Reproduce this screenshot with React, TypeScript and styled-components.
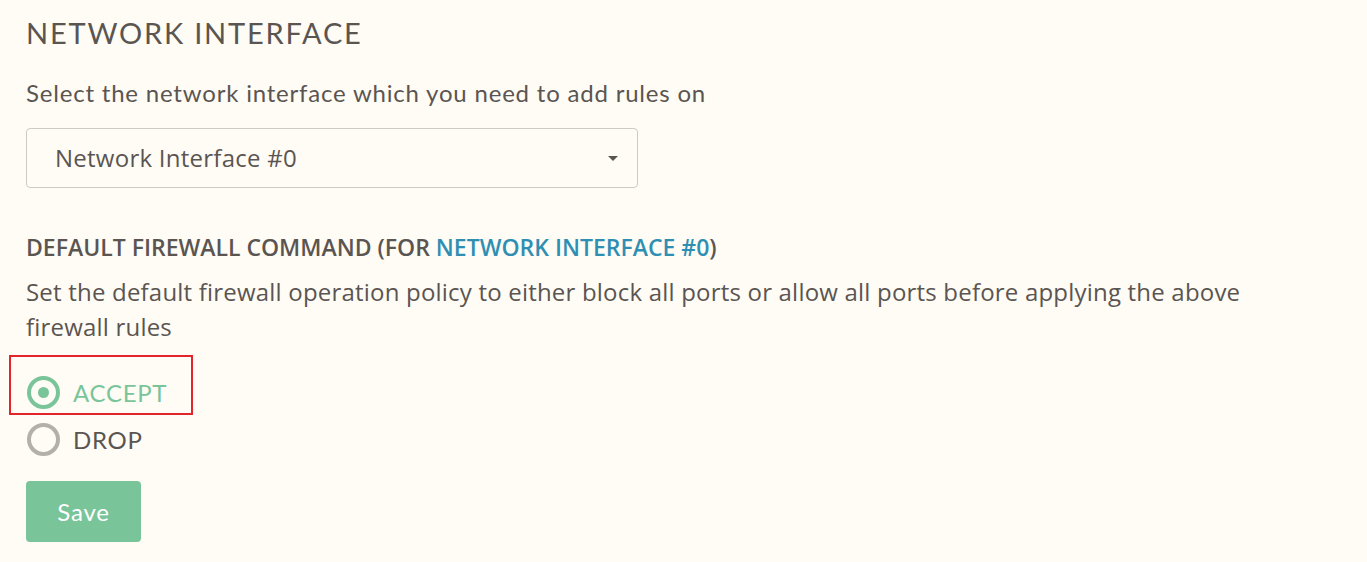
import React, { useState } from "react";
import styled, { createGlobalStyle } from "styled-components";

const Global = createGlobalStyle`
  html, body { margin: 0; padding: 0; background: #fffcf5; }
  body { font-family: "Open Sans", sans-serif; color: #5b5552; }
`;

const Page = styled.div`
  width: 1300px;
  padding: 14px 0 0 26px;
  box-sizing: border-box;
  display: flex;
  flex-direction: column;
  align-items: flex-start;
`;

const Title = styled.h1`
  margin: 0;
  font-family: "Lato", sans-serif;
  font-weight: 400;
  font-size: 29px;
  line-height: 38px;
  letter-spacing: 1.8px;
  color: #5b5552;
`;

const Lead = styled.p`
  margin: 25px 0 0 0;
  font-family: "Lato", sans-serif;
  font-size: 24px;
  line-height: 32px;
  letter-spacing: 0.8px;
  color: #5b5552;
`;

const SelectBox = styled.div`
  margin-top: 19px;
  width: 612px;
  height: 60px;
  box-sizing: border-box;
  border: 1px solid #cfcbc4;
  border-radius: 4px;
  background: #fffcf5;
  display: flex;
  align-items: center;
  justify-content: space-between;
  padding: 0 19px 2px 28px;
  font-size: 24px;
  letter-spacing: 0.25px;
  color: #5b5552;
`;

const Caret = styled.span`
  width: 0;
  height: 0;
  margin-top: 2px;
  border-left: 5.5px solid transparent;
  border-right: 5.5px solid transparent;
  border-top: 5.5px solid #5b5552;
`;

const SubTitle = styled.h2`
  margin: 44px 0 0 0;
  font-size: 23px;
  font-weight: 600;
  letter-spacing: 0px;
  line-height: 30px;
  color: #5b5552;
`;

const Link = styled.span`
  color: #2f8fb3;
`;

const Para = styled.p`
  margin: 12px 0 0 0;
  font-size: 24px;
  line-height: 35px;
  letter-spacing: 0.2px;
  color: #5b5552;
`;

const RadioGroup = styled.div`
  margin-top: 31px;
  display: flex;
  flex-direction: column;
  gap: 12px;
  align-items: flex-start;
`;

const RadioRow = styled.label<{ $highlight?: boolean }>`
  display: flex;
  align-items: center;
  gap: 13px;
  height: 35px;
  padding-left: 1px;
  cursor: pointer;
  position: relative;
  &::after {
    content: "";
    display: ${(p) => (p.$highlight ? "block" : "none")};
    position: absolute;
    left: -17px;
    top: -20px;
    width: 184px;
    height: 60px;
    border: 2px solid #e3242b;
    box-sizing: border-box;
    pointer-events: none;
  }
`;

const Circle = styled.span<{ $checked: boolean }>`
  width: 33px;
  height: 33px;
  box-sizing: border-box;
  border-radius: 50%;
  border: 4px solid ${(p) => (p.$checked ? "#7ac49a" : "#b3afa9")};
  display: flex;
  align-items: center;
  justify-content: center;
  &::before {
    content: "";
    width: 11px;
    height: 11px;
    border-radius: 50%;
    background: #7ac49a;
    display: ${(p) => (p.$checked ? "block" : "none")};
  }
`;

const RadioText = styled.span<{ $checked: boolean }>`
  font-family: "Lato", sans-serif;
  font-size: 24px;
  letter-spacing: 0.7px;
  color: ${(p) => (p.$checked ? "#7ac49a" : "#5b5552")};
`;

const SaveButton = styled.button`
  margin-top: 24px;
  width: 115px;
  height: 61px;
  border: none;
  border-radius: 4px;
  background: #7ac49a;
  color: #fff;
  font-family: "Lato", sans-serif;
  font-size: 24px;
  letter-spacing: 0.8px;
  cursor: pointer;
`;

export default function App() {
  const [value, setValue] = useState("ACCEPT");
  return (
    <>
      <Global />
      <Page>
        <Title>NETWORK INTERFACE</Title>
        <Lead>Select the network interface which you need to add rules on</Lead>
        <SelectBox>
          <span>Network Interface #0</span>
          <Caret />
        </SelectBox>
        <SubTitle>
          DEFAULT FIREWALL COMMAND (FOR <Link>NETWORK INTERFACE #0</Link>)
        </SubTitle>
        <Para>
          Set the default firewall operation policy to either block all ports or allow all ports before applying the above firewall rules
        </Para>
        <RadioGroup>
          {["ACCEPT", "DROP"].map((v) => (
            <RadioRow key={v} $highlight={v === "ACCEPT"} onClick={() => setValue(v)}>
              <Circle $checked={value === v} />
              <RadioText $checked={value === v}>{v}</RadioText>
            </RadioRow>
          ))}
        </RadioGroup>
        <SaveButton>Save</SaveButton>
      </Page>
    </>
  );
}
